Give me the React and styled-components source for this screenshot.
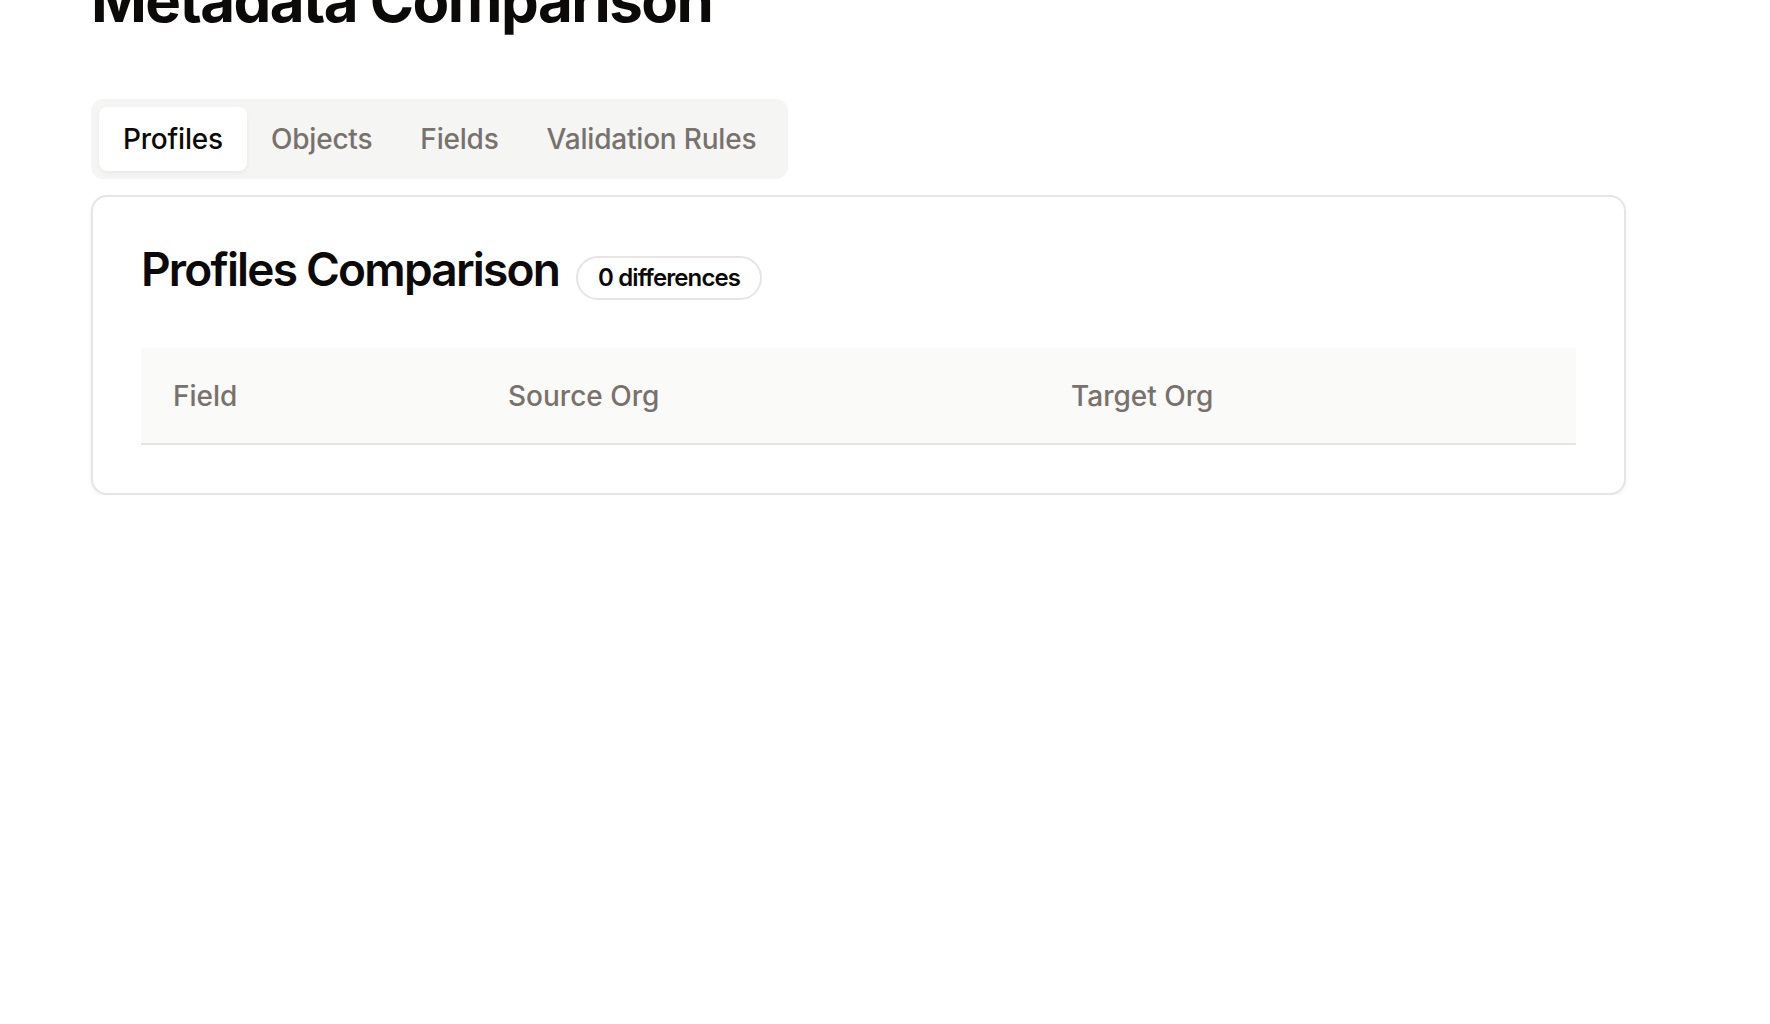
import React, { useState } from 'react';
import styled, { createGlobalStyle } from 'styled-components';

const GlobalStyle = createGlobalStyle`
    html, body {
        margin: 0;
        padding: 0;
        background: #ffffff;
        font-family: Inter, "Noto Sans", "Liberation Sans", sans-serif;
        color: #0c0a09;
    }
    * {
        box-sizing: border-box;
    }
`;

const Page = styled.main`
    padding: 0 144px 0 91px;
    margin-top: -36px;
`;

const Title = styled.h1`
    margin: 0 0 63px;
    font-size: 60px;
    line-height: 72px;
    font-weight: 700;
    letter-spacing: -1.55px;
    color: #0c0a09;
`;

const TabList = styled.div`
    display: inline-flex;
    align-items: center;
    height: 80px;
    padding: 8px;
    border-radius: 12px;
    background: #f5f5f4;
`;

const Tab = styled.button`
    border: none;
    margin: 0;
    padding: 12px 24px;
    font-family: inherit;
    font-size: 28px;
    line-height: 40px;
    font-weight: 500;
    letter-spacing: -0.2px;
    border-radius: 8px;
    cursor: pointer;
    white-space: nowrap;
    background: ${p => (p.$active ? '#ffffff' : 'transparent')};
    color: ${p => (p.$active ? '#0c0a09' : '#78716c')};
    box-shadow: ${p => (p.$active ? '0 2px 4px rgba(0, 0, 0, 0.05)' : 'none')};
`;

const Card = styled.section`
    margin-top: 16px;
    border: 2px solid #e7e5e4;
    border-radius: 16px;
    background: #ffffff;
    box-shadow: 0 2px 4px rgba(0, 0, 0, 0.05);
`;

const CardHeader = styled.div`
    display: flex;
    align-items: baseline;
    gap: 17px;
    padding: 48px;
`;

const CardTitle = styled.h2`
    margin: 0;
    font-size: 46px;
    line-height: 48px;
    font-weight: 600;
    letter-spacing: -1.8px;
    color: #0c0a09;
`;

const Badge = styled.span`
    display: inline-flex;
    align-items: center;
    padding: 4px 20px;
    border: 2px solid #e7e5e4;
    border-radius: 9999px;
    font-size: 24px;
    line-height: 32px;
    font-weight: 600;
    letter-spacing: -0.9px;
    color: #0c0a09;
`;

const CardContent = styled.div`
    padding: 0 48px 48px;
`;

const Table = styled.table`
    width: 100%;
    border-collapse: collapse;
    table-layout: fixed;
`;

const HeadRow = styled.tr`
    background: #fafaf9;
    border-bottom: 2px solid #e7e5e4;
`;

const HeadCell = styled.th`
    height: 96px;
    padding: 0 32px;
    text-align: left;
    vertical-align: middle;
    font-size: 28px;
    font-weight: 500;
    color: #78716c;
    width: ${p => p.$width || 'auto'};
`;

const tabs = ['Profiles', 'Objects', 'Fields', 'Validation Rules'];

const App = () => {
    const [active, setActive] = useState('Profiles');

    return (
        <>
            <GlobalStyle />
            <Page>
                <Title>Metadata Comparison</Title>
                <TabList>
                    {tabs.map(t => (
                        <Tab key={t} $active={t === active} onClick={() => setActive(t)}>
                            {t}
                        </Tab>
                    ))}
                </TabList>
                <Card>
                    <CardHeader>
                        <CardTitle>{active} Comparison</CardTitle>
                        <Badge>0 differences</Badge>
                    </CardHeader>
                    <CardContent>
                        <Table>
                            <thead>
                                <HeadRow>
                                    <HeadCell $width="335px">Field</HeadCell>
                                    <HeadCell $width="563px">Source Org</HeadCell>
                                    <HeadCell>Target Org</HeadCell>
                                </HeadRow>
                            </thead>
                            <tbody />
                        </Table>
                    </CardContent>
                </Card>
            </Page>
        </>
    );
};

export default App;
